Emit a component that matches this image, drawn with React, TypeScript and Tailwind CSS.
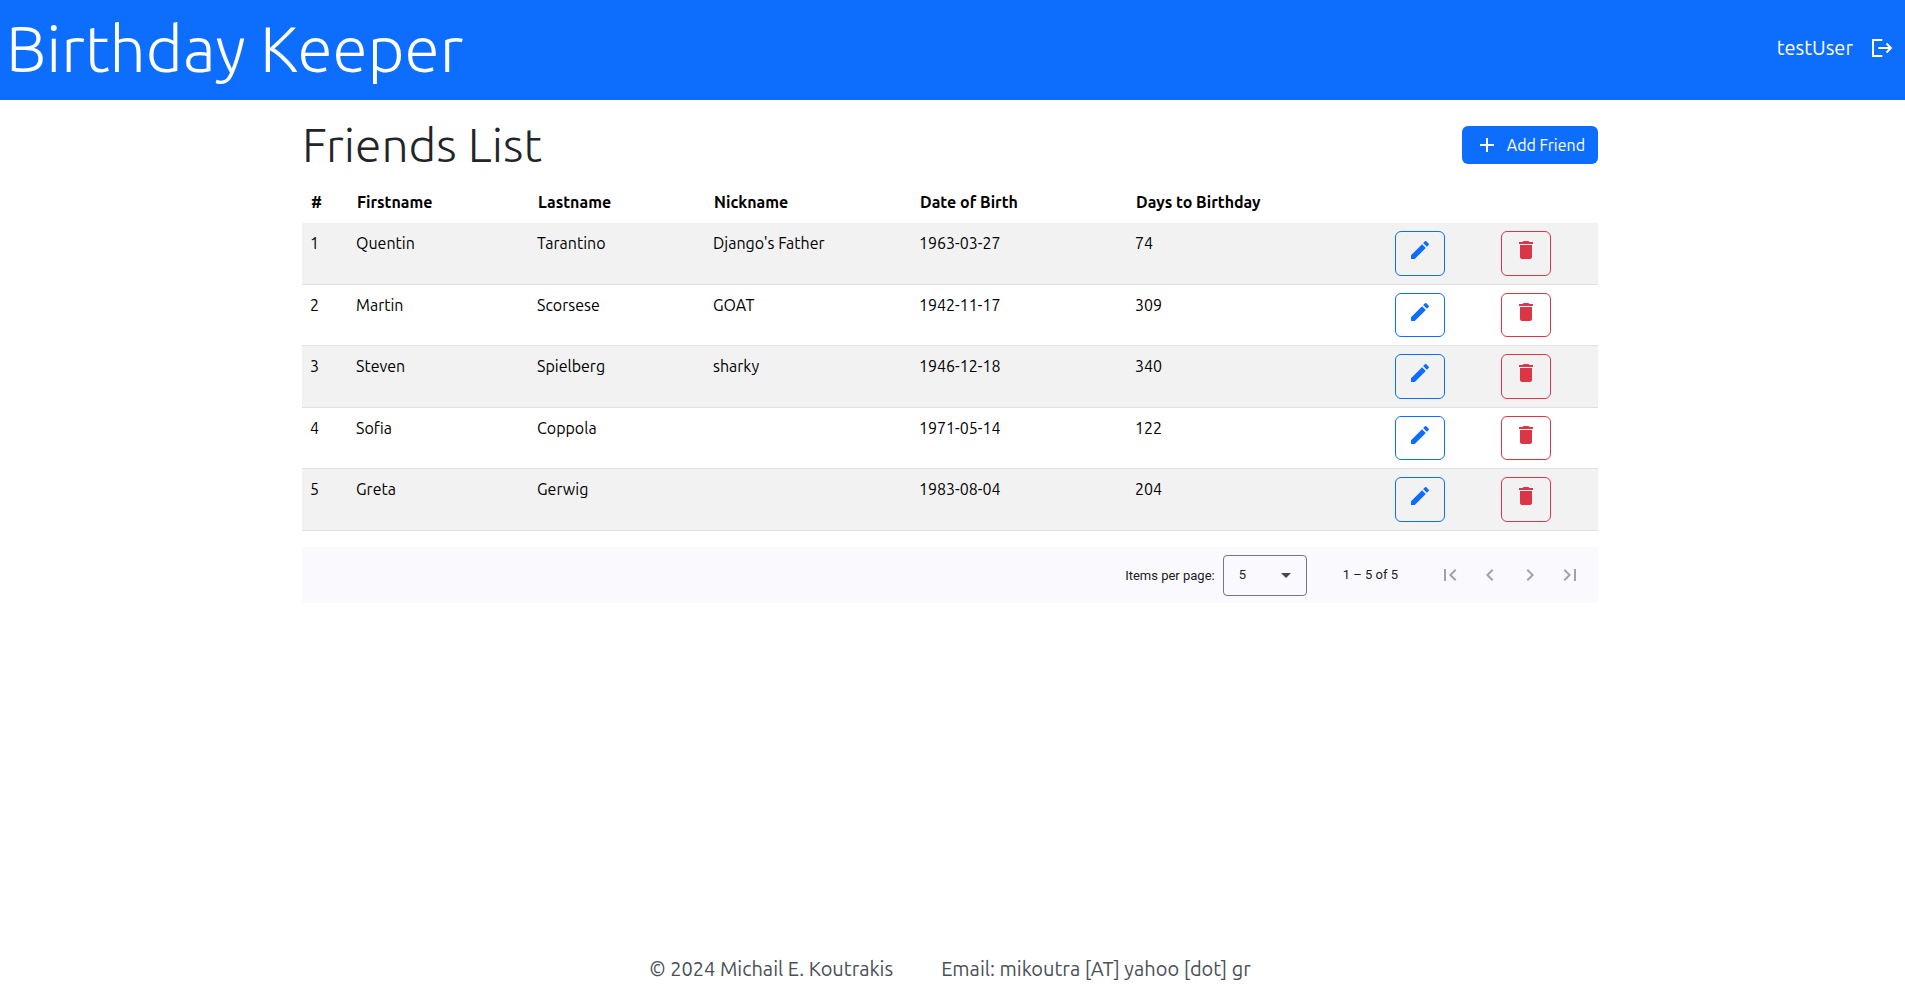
import { MdAdd, MdArrowDropDown, MdChevronLeft, MdChevronRight, MdDelete, MdEdit, MdFirstPage, MdLastPage } from "react-icons/md";

const friends = [
  { id: 1, first: "Quentin", last: "Tarantino", nick: "Django's Father", dob: "1963-03-27", days: 74 },
  { id: 2, first: "Martin", last: "Scorsese", nick: "GOAT", dob: "1942-11-17", days: 309 },
  { id: 3, first: "Steven", last: "Spielberg", nick: "sharky", dob: "1946-12-18", days: 340 },
  { id: 4, first: "Sofia", last: "Coppola", nick: "", dob: "1971-05-14", days: 122 },
  { id: 5, first: "Greta", last: "Gerwig", nick: "", dob: "1983-08-04", days: 204 },
];

function LogoutIcon() {
  return (
    <svg viewBox="0 0 24 24" className="size-6" fill="none" stroke="currentColor" strokeWidth="2" aria-hidden="true">
      <path d="M13.300 4H4v16h9.300M9.300 12h13M17.500 7.500l4.400 4.500-4.400 4.500" />
    </svg>
  );
}

function Header() {
  return (
    <header className="flex h-25 items-center justify-between bg-[#0d6efd] pr-3 pb-1 pl-1.5 text-white">
      <h1 className="text-[64px] leading-none font-light">Birthday Keeper</h1>
      <div className="flex items-center gap-4 text-xl">
        <span>testUser</span>
        <button type="button" aria-label="Log out">
          <LogoutIcon />
        </button>
      </div>
    </header>
  );
}

const headCell = "pt-[7px] pr-2 pb-[9px] pl-[9px]";

function FriendsTable() {
  return (
    <table className="w-full table-fixed border-collapse text-left text-base leading-6 text-black">
      <colgroup>
        <col className="w-[46px]" />
        <col className="w-[181px]" />
        <col className="w-[176px]" />
        <col className="w-[206px]" />
        <col className="w-[216px]" />
        <col className="w-[260px]" />
        <col className="w-[106px]" />
        <col className="w-[105px]" />
      </colgroup>
      <thead>
        <tr>
          <th className={headCell}>#</th>
          <th className={headCell}>Firstname</th>
          <th className={headCell}>Lastname</th>
          <th className={headCell}>Nickname</th>
          <th className={headCell}>Date of Birth</th>
          <th className={headCell}>Days to Birthday</th>
          <td className="p-2"></td>
          <td className="p-2"></td>
        </tr>
      </thead>
      <tbody>
        {friends.map((f) => (
          <tr key={f.id} className="group border-b border-[#dee2e6] align-top odd:bg-[#f2f2f2]">
            <td className="p-2">{f.id}</td>
            <td className="p-2">{f.first}</td>
            <td className="p-2">{f.last}</td>
            <td className="p-2">{f.nick}</td>
            <td className="p-2">{f.dob}</td>
            <td className="p-2">{f.days}</td>
            <td className="p-2">
              <button type="button" aria-label={`Edit ${f.first}`} className="flex h-11 w-[50px] justify-center rounded-md border border-[#0d6efd] pt-1.5 text-[#0d6efd] group-odd:h-[45px]">
                <MdEdit className="size-6" />
              </button>
            </td>
            <td className="p-2">
              <button type="button" aria-label={`Delete ${f.first}`} className="flex h-11 w-[50px] justify-center rounded-md border border-[#dc3545] pt-1.5 text-[#dc3545] group-odd:h-[45px]">
                <MdDelete className="size-6" />
              </button>
            </td>
          </tr>
        ))}
      </tbody>
    </table>
  );
}

const pageButton = "flex size-10 items-center justify-center text-[#a3a2a7]";

function Paginator() {
  return (
    <div className="mt-4 flex h-14 items-center justify-end bg-[#faf9fd] pr-2 font-['Roboto',sans-serif] text-[13px] text-[#1b1b1f]">
      <label htmlFor="page-size" className="pt-0.5">Items per page:</label>
      <div className="relative ml-2 flex items-center">
        <select id="page-size" defaultValue="5" className="h-[41px] w-[84px] appearance-none rounded border border-[#757780] bg-transparent px-[15px]">
          <option>5</option>
          <option>10</option>
          <option>25</option>
        </select>
        <MdArrowDropDown className="pointer-events-none absolute right-[9px] size-6 text-[#44474e]" />
      </div>
      <span className="mr-8 ml-9">1 – 5 of 5</span>
      <button type="button" disabled aria-label="First page" className={pageButton}><MdFirstPage className="size-6" /></button>
      <button type="button" disabled aria-label="Previous page" className={pageButton}><MdChevronLeft className="size-6" /></button>
      <button type="button" disabled aria-label="Next page" className={pageButton}><MdChevronRight className="size-6" /></button>
      <button type="button" disabled aria-label="Last page" className={pageButton}><MdLastPage className="size-6" /></button>
    </div>
  );
}

export default function App() {
  return (
    <div className="flex min-h-screen flex-col bg-white font-['Ubuntu','Noto_Sans',sans-serif] text-[#212529]">
      <Header />
      <main className="grow pr-[5px]">
        <div className="mx-auto max-w-[1296px]">
          <div className="flex h-[83px] items-center justify-between pt-[7px]">
            <h2 className="pb-0.5 text-5xl leading-none font-light">Friends List</h2>
            <button type="button" className="flex h-[38px] items-center rounded-md bg-[#0d6efd] px-[13px] text-base text-white">
              <MdAdd className="mr-2 size-6" />
              Add Friend
            </button>
          </div>
          <FriendsTable />
          <Paginator />
        </div>
      </main>
      <footer className="flex items-center justify-center gap-12 pr-[5px] pb-[7px] text-xl leading-8 text-[#495057]">
        <span>© 2024 Michail E. Koutrakis</span>
        <span>Email: mikoutra [AT] yahoo [dot] gr</span>
      </footer>
    </div>
  );
}
